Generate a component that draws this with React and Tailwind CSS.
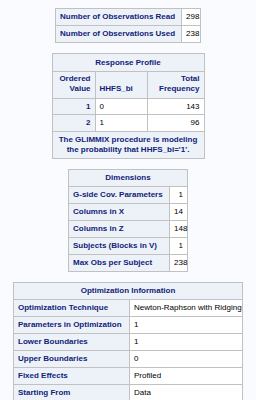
const hd = "bg-[#edf2f9] text-[#112277] font-bold border border-[#c1c1c1] px-[4px] whitespace-nowrap";
const dt = "bg-white text-black border border-[#c1c1c1] px-[4px] whitespace-nowrap";

// cols = widths of the leading columns, the last one takes what is left
const Table = ({ width, cols, children }) => (
  <table className="border-collapse table-fixed" style={{ width }}>
    <colgroup>
      {cols.map((w, i) => (
        <col key={i} style={{ width: w }} />
      ))}
      <col />
    </colgroup>
    <tbody>{children}</tbody>
  </table>
);

export default function App() {
  return (
    <div
      className="min-h-[400px] bg-[#fafbfe] flex flex-col items-center gap-[10px] pt-[8px] text-[8px] leading-none"
      style={{ fontFamily: '"Liberation Sans", Arial, sans-serif' }}
    >
      {/* observation counts */}
      <Table width={146} cols={[126]}>
        <tr className="h-[17px]">
          <td className={`${hd} text-left`}>Number of Observations Read</td>
          <td className={`${dt} text-left px-[3px]`}>298</td>
        </tr>
        <tr className="h-[17px]">
          <td className={`${hd} text-left`}>Number of Observations Used</td>
          <td className={`${dt} text-left px-[3px]`}>238</td>
        </tr>
      </Table>

      {/* response profile */}
      <Table width={153} cols={[43, 52]}>
        <tr className="h-[18px]">
          <td colSpan={3} className={`${hd} text-center`}>Response Profile</td>
        </tr>
        <tr className="h-[27px]">
          <td className={`${hd} text-right align-bottom pb-[4px] leading-[10px]`}>
            Ordered
            <br />
            Value
          </td>
          <td className={`${hd} text-left align-bottom pb-[4px] leading-[10px]`}>HHFS_bi</td>
          <td className={`${hd} text-right align-bottom pb-[4px] leading-[10px]`}>
            Total
            <br />
            Frequency
          </td>
        </tr>
        <tr className="h-[16px]">
          <td className={`${hd} text-right`}>1</td>
          <td className={`${dt} text-left`}>0</td>
          <td className={`${dt} text-right`}>143</td>
        </tr>
        <tr className="h-[17px]">
          <td className={`${hd} text-right`}>2</td>
          <td className={`${dt} text-left`}>1</td>
          <td className={`${dt} text-right`}>96</td>
        </tr>
        <tr className="h-[27px]">
          <td colSpan={3} className={`${hd} text-center leading-[10px]`}>
            The GLIMMIX procedure is modeling
            <br />
            the probability that HHFS_bi='1'.
          </td>
        </tr>
      </Table>

      {/* dimensions */}
      <Table width={120} cols={[101]}>
        <tr className="h-[17px]">
          <td colSpan={2} className={`${hd} text-center`}>Dimensions</td>
        </tr>
        {[
          ["G-side Cov. Parameters", "1"],
          ["Columns in X", "14"],
          ["Columns in Z", "148"],
          ["Subjects (Blocks in V)", "1"],
          ["Max Obs per Subject", "238"],
        ].map(([k, v]) => (
          <tr key={k} className="h-[17px]">
            <td className={`${hd} text-left`}>{k}</td>
            <td className={`${dt} text-right px-[3px]`}>{v}</td>
          </tr>
        ))}
      </Table>

      {/* optimization info */}
      <Table width={230} cols={[116]}>
        <tr className="h-[17px]">
          <td colSpan={2} className={`${hd} text-center`}>Optimization Information</td>
        </tr>
        {[
          ["Optimization Technique", "Newton-Raphson with Ridging"],
          ["Parameters in Optimization", "1"],
          ["Lower Boundaries", "1"],
          ["Upper Boundaries", "0"],
          ["Fixed Effects", "Profiled"],
          ["Starting From", "Data"],
        ].map(([k, v]) => (
          <tr key={k} className="h-[17px]">
            <td className={`${hd} text-left`}>{k}</td>
            <td className={`${dt} text-left px-[3px]`}>{v}</td>
          </tr>
        ))}
      </Table>
    </div>
  );
}
